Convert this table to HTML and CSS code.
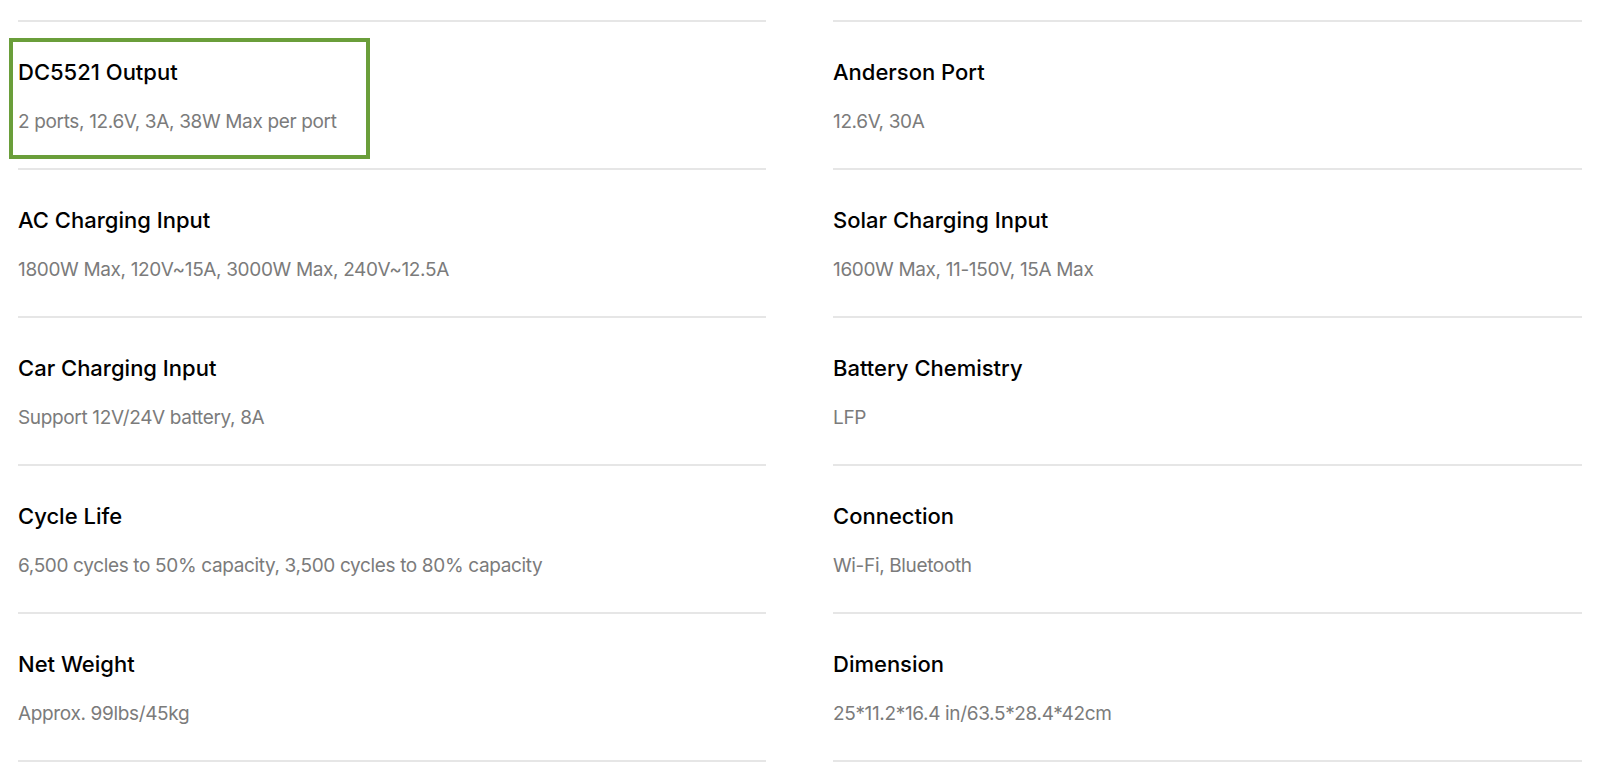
FILE: index.html
```html
<!DOCTYPE html>
<html lang="en">
<head>
<meta charset="utf-8">
<title>Specs</title>
<link rel="stylesheet" href="styles.css">
</head>
<body>
<div class="specs">
  <div class="col">
    <div class="row">
      <div class="item item--focus">
        <div class="title">DC5521 Output</div>
        <div class="value">2 ports, 12.6V, 3A, 38W Max per port</div>
      </div>
    </div>
    <div class="row">
      <div class="item">
        <div class="title">AC Charging Input</div>
        <div class="value">1800W Max, 120V~15A, 3000W Max, 240V~12.5A</div>
      </div>
    </div>
    <div class="row">
      <div class="item">
        <div class="title">Car Charging Input</div>
        <div class="value">Support 12V/24V battery, 8A</div>
      </div>
    </div>
    <div class="row">
      <div class="item">
        <div class="title">Cycle Life</div>
        <div class="value">6,500 cycles to 50% capacity, 3,500 cycles to 80% capacity</div>
      </div>
    </div>
    <div class="row">
      <div class="item">
        <div class="title">Net Weight</div>
        <div class="value">Approx. 99lbs/45kg</div>
      </div>
    </div>
  </div>
  <div class="col">
    <div class="row">
      <div class="item">
        <div class="title">Anderson Port</div>
        <div class="value">12.6V, 30A</div>
      </div>
    </div>
    <div class="row">
      <div class="item">
        <div class="title">Solar Charging Input</div>
        <div class="value">1600W Max, 11-150V, 15A Max</div>
      </div>
    </div>
    <div class="row">
      <div class="item">
        <div class="title">Battery Chemistry</div>
        <div class="value">LFP</div>
      </div>
    </div>
    <div class="row">
      <div class="item">
        <div class="title">Connection</div>
        <div class="value">Wi-Fi, Bluetooth</div>
      </div>
    </div>
    <div class="row">
      <div class="item">
        <div class="title">Dimension</div>
        <div class="value">25*11.2*16.4 in/63.5*28.4*42cm</div>
      </div>
    </div>
  </div>
</div>
</body>
</html>
```

FILE: styles.css
```css
* { box-sizing: border-box; }
html, body { margin: 0; padding: 0; background: #fff; }
body {
  font-family: Inter, "Noto Sans", sans-serif;
  color: #000;
}
.specs {
  display: grid;
  grid-template-columns: 748px 749px;
  column-gap: 67px;
  padding: 20px 18px 0 18px;
}
.col {
  border-top: 2px solid #e6e6e6;
}
.row {
  height: 148px;
  border-bottom: 2px solid #e6e6e6;
  padding-top: 35px;
}
.item {
  display: inline-block;
}
.item--focus {
  outline: 4px solid #6a9e3a;
  outline-offset: 0;
  width: 353px;
  height: 113px;
  margin: -15px 0 0 -5px;
  padding: 15px 0 0 5px;
}
.title {
  font-size: 22px;
  font-weight: 500;
  line-height: 30px;
}
.value {
  margin-top: 22px;
  font-size: 19px;
  line-height: 26px;
  letter-spacing: -0.35px;
  color: #7b7b7b;
}
```
